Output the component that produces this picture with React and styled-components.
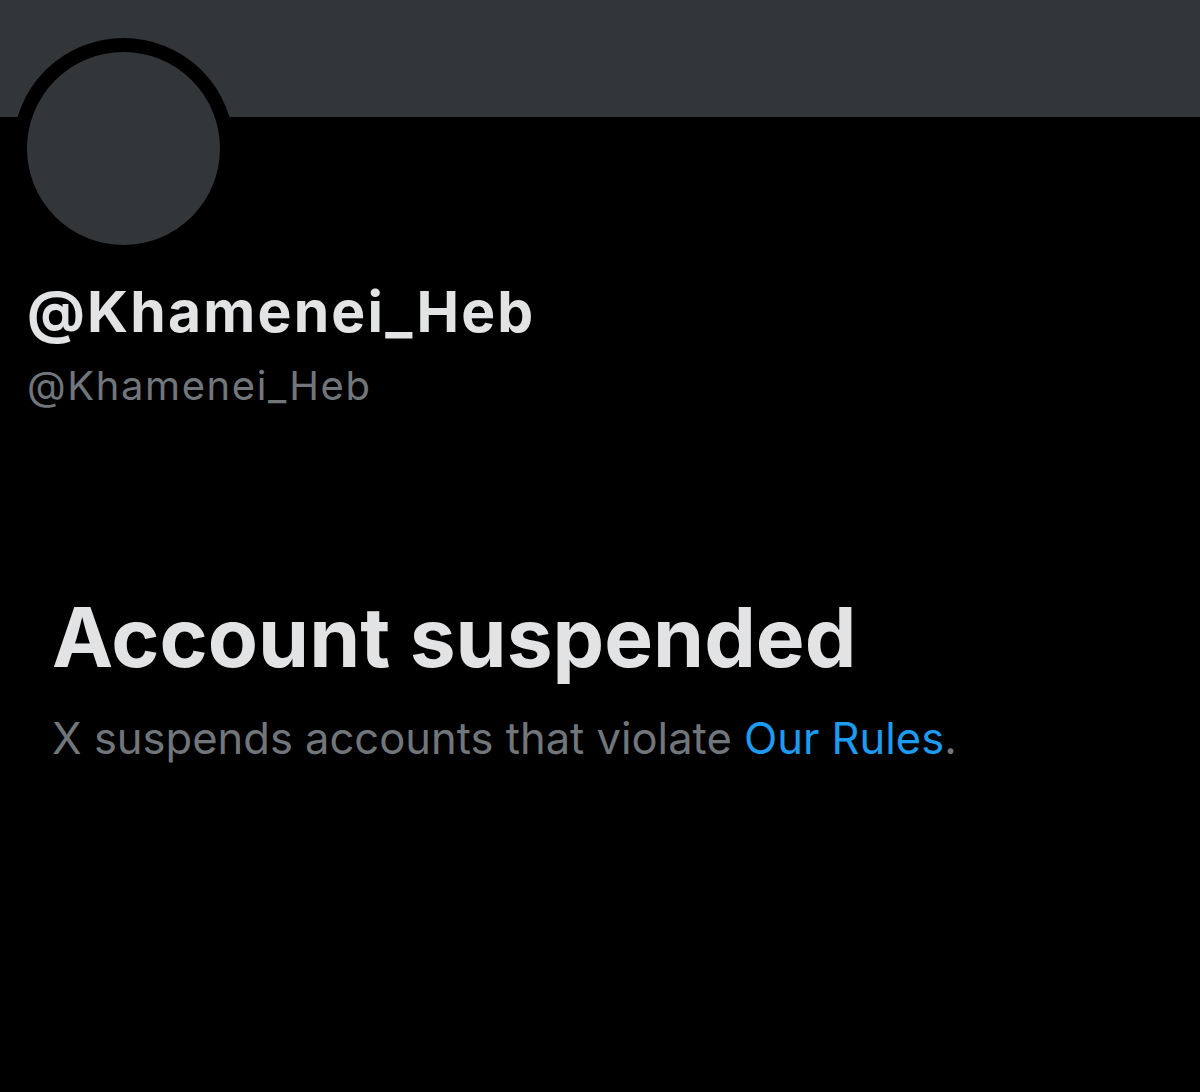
import React from 'react';
import styled, { createGlobalStyle } from 'styled-components';

const Global = createGlobalStyle`
  html, body {
    margin: 0;
    padding: 0;
    background: #000;
  }
  body {
    font-family: Inter, Roboto, "Liberation Sans", sans-serif;
    color: #e2e3e4;
  }
`;

const Page = styled.div`
  width: 1200px;
  height: 1092px;
  background: #000;
  overflow: hidden;
`;

const Banner = styled.div`
  height: 117px;
  background: #333639;
`;

const Avatar = styled.div`
  width: 193px;
  height: 193px;
  margin: -79px 0 0 13px;
  border: 14px solid #000;
  border-radius: 50%;
  background: #333639;
`;

const Names = styled.div`
  padding: 21px 0 0 27px;
`;

const DisplayName = styled.div`
  font-size: 57px;
  font-weight: 700;
  line-height: 64px;
  letter-spacing: 2.2px;
`;

const Handle = styled.div`
  margin-top: 19px;
  font-size: 40px;
  line-height: 46px;
  letter-spacing: 1.6px;
  color: #71767b;
`;

const Notice = styled.section`
  padding: 184px 0 0 52px;
`;

const Title = styled.h1`
  margin: 0;
  font-size: 82px;
  font-weight: 700;
  line-height: 90px;
`;

const Sub = styled.p`
  margin: 29px 0 0;
  font-size: 43.5px;
  line-height: 52px;
  color: #71767b;
`;

const Link = styled.a`
  color: #1d9bf0;
  text-decoration: none;
`;

export default function App() {
  return (
    <Page>
      <Global />
      <Banner />
      <Avatar />
      <Names>
        <DisplayName>@Khamenei_Heb</DisplayName>
        <Handle>@Khamenei_Heb</Handle>
      </Names>
      <Notice>
        <Title>Account suspended</Title>
        <Sub>
          X suspends accounts that violate <Link href="#">Our Rules</Link>.
        </Sub>
      </Notice>
    </Page>
  );
}
